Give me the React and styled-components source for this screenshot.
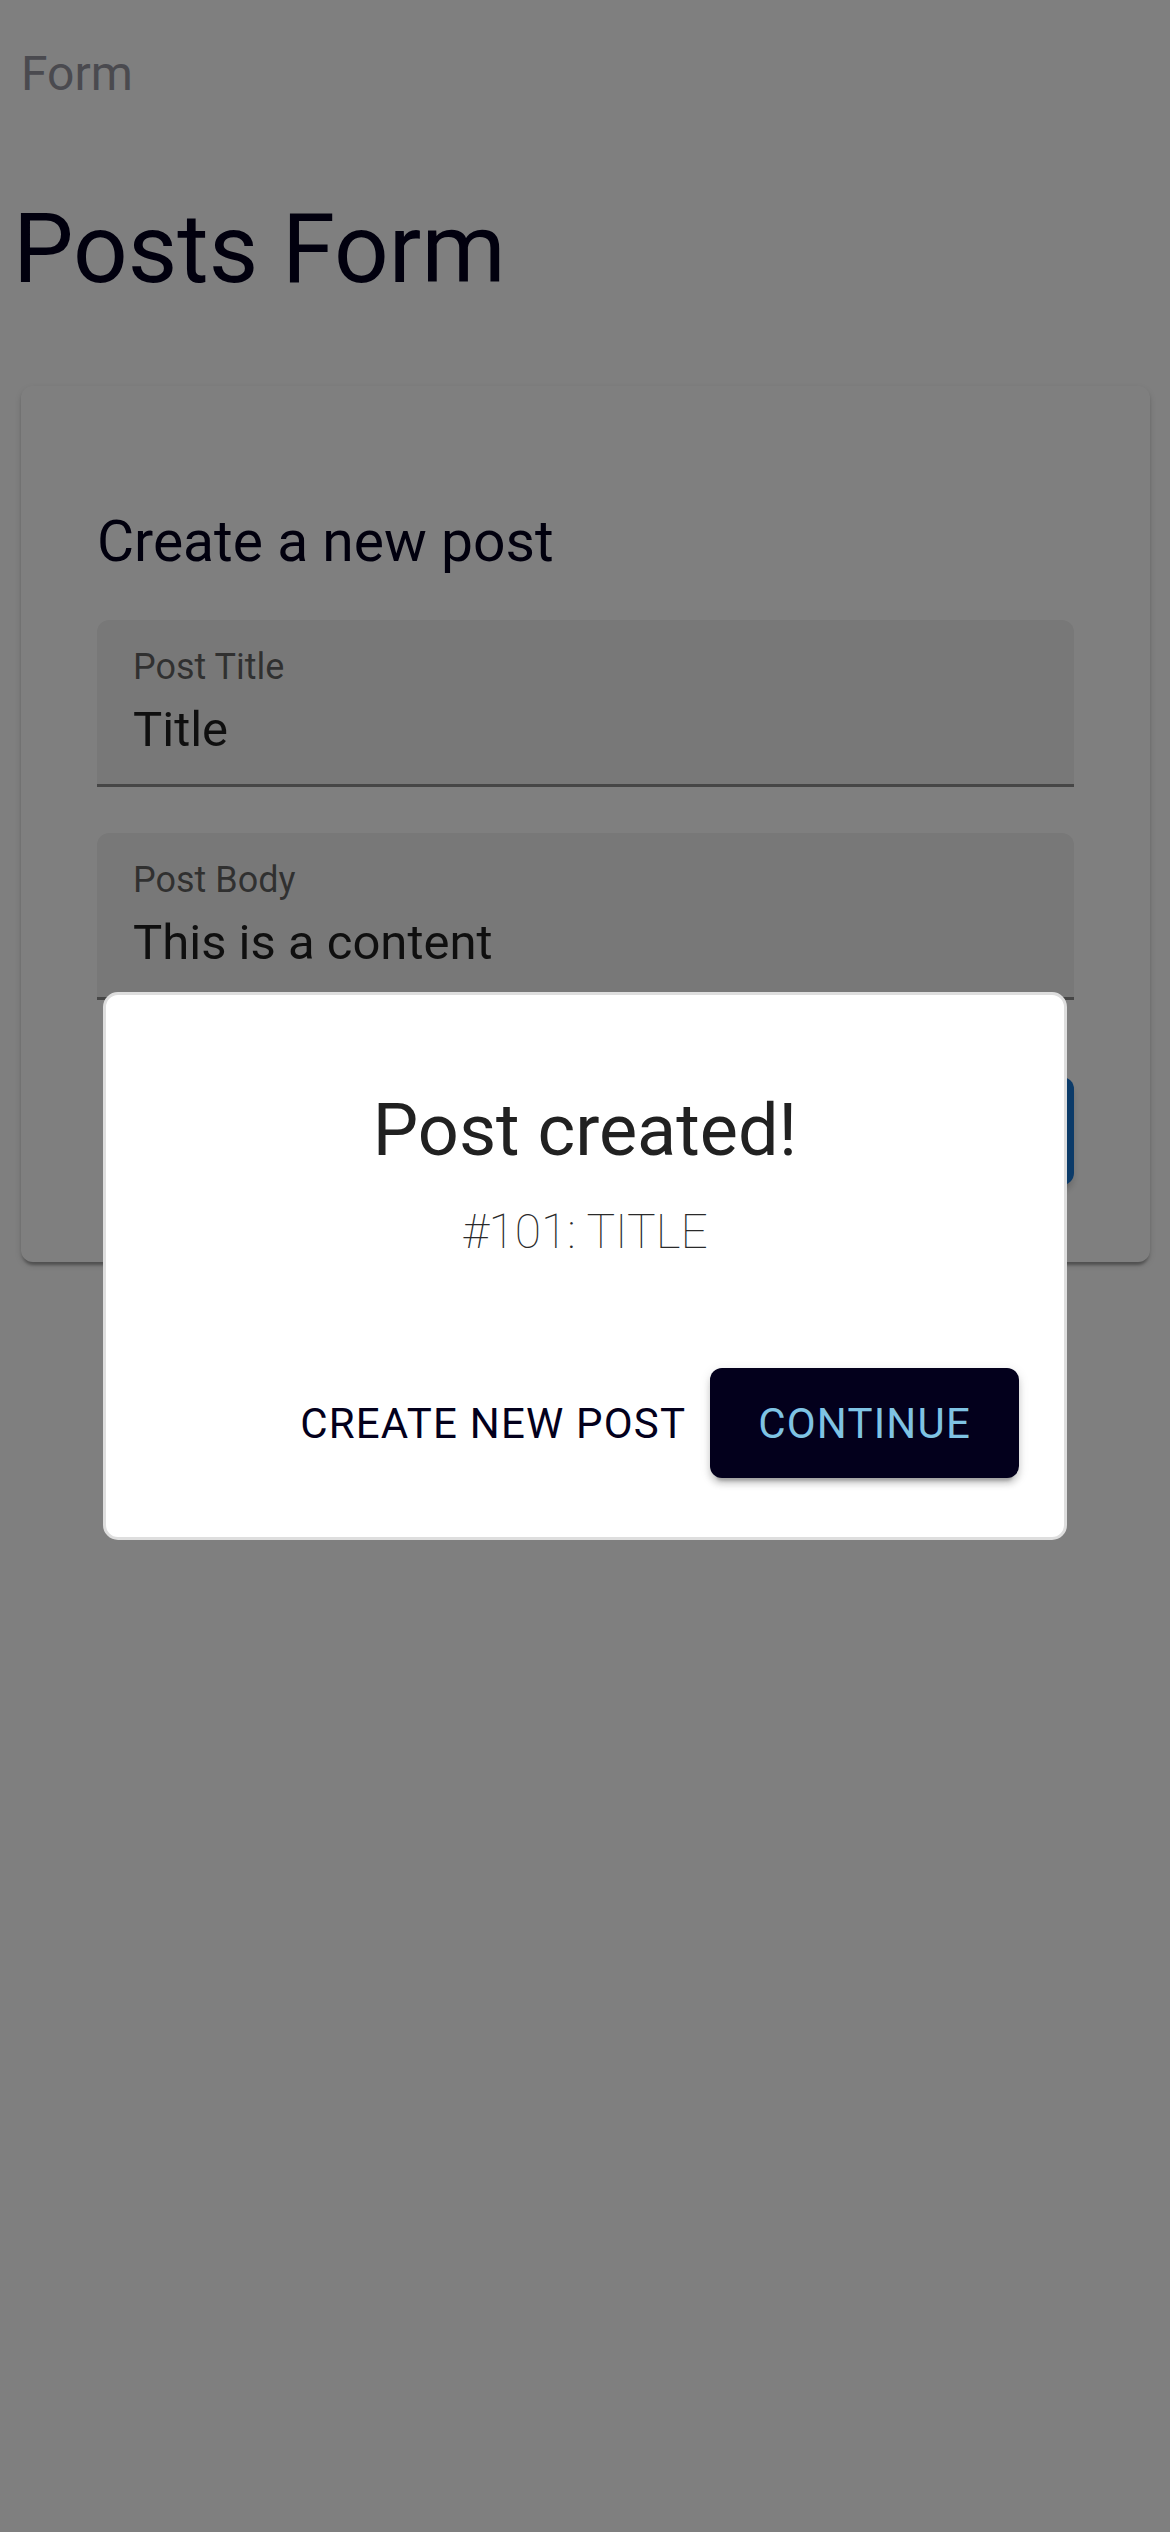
import React, { useState } from 'react';
import styled, { createGlobalStyle } from 'styled-components';

const GlobalStyle = createGlobalStyle`
  html, body {
    margin: 0;
    padding: 0;
    background: #ffffff;
    font-family: Roboto, 'Liberation Sans', sans-serif;
  }
  * {
    box-sizing: border-box;
  }
`;

const Page = styled.div`
  min-height: 2532px;
  padding: 46px 20px 0 21px;
`;

const Crumb = styled.div`
  font-size: 48px;
  line-height: 56px;
  color: #95949f;
`;

const PageTitle = styled.h1`
  margin: 90px 0 0 -8px;
  font-size: 96px;
  line-height: 115px;
  font-weight: 400;
  color: #03001c;
`;

const Card = styled.div`
  margin-top: 79px;
  background: #ffffff;
  border-radius: 12px;
  padding: 122px 76px 77px;
  box-shadow: 0 6px 3px -3px rgba(0, 0, 0, 0.2), 0 3px 3px 0 rgba(0, 0, 0, 0.14),
    0 3px 9px 0 rgba(0, 0, 0, 0.12);
  display: flex;
  flex-direction: column;
`;

const CardTitle = styled.h2`
  margin: 0 0 45px;
  font-size: 57px;
  line-height: 67px;
  font-weight: 400;
  color: #03001c;
`;

const Field = styled.div`
  background: rgba(0, 0, 0, 0.06);
  border-radius: 12px 12px 0 0;
  border-bottom: 3px solid rgba(0, 0, 0, 0.42);
  padding: 29px 36px 30px;
  margin-bottom: ${(p) => p.$gap || 0}px;
`;

const FieldLabel = styled.div`
  font-size: 36px;
  line-height: 36px;
  color: rgba(0, 0, 0, 0.6);
`;

const FieldValue = styled.div`
  margin-top: 21px;
  font-size: 49px;
  line-height: 48px;
  color: rgba(0, 0, 0, 0.87);
`;

const SubmitRow = styled.div`
  display: flex;
  justify-content: flex-end;
  margin-top: 77px;
`;

const SubmitButton = styled.button`
  height: 108px;
  padding: 0 48px;
  border: 0;
  border-radius: 12px;
  background: #1976d2;
  color: #ffffff;
  font-family: Roboto, 'Liberation Sans', sans-serif;
  font-size: 42px;
  font-weight: 500;
  letter-spacing: 1.2px;
  box-shadow: 0 9px 3px -6px rgba(0, 0, 0, 0.2), 0 6px 6px 0 rgba(0, 0, 0, 0.14);
`;

const Backdrop = styled.div`
  position: fixed;
  inset: 0;
  background: rgba(0, 0, 0, 0.5);
  display: flex;
  align-items: center;
  justify-content: center;
`;

const Dialog = styled.div`
  width: 964px;
  background: #ffffff;
  border: 3px solid #dedede;
  border-radius: 15px;
  padding: 93px 45px 59px;
  display: flex;
  flex-direction: column;
`;

const DialogTitle = styled.div`
  text-align: center;
  font-size: 72px;
  line-height: 86px;
  color: #212121;
`;

const DialogSub = styled.div`
  margin-top: 30px;
  text-align: center;
  font-size: 48px;
  line-height: 56px;
  font-weight: 100;
  color: #2a2a2a;
`;

const Actions = styled.div`
  display: flex;
  justify-content: flex-end;
  align-items: center;
  margin-top: 108px;
`;

const ActionButton = styled.button`
  height: 110px;
  padding: 0 ${(p) => (p.$solid ? 48 : 24)}px;
  border: 0;
  border-radius: 12px;
  font-family: Roboto, 'Liberation Sans', sans-serif;
  font-size: 42px;
  font-weight: 400;
  letter-spacing: 1.2px;
  background: ${(p) => (p.$solid ? '#03001c' : 'transparent')};
  color: ${(p) => (p.$solid ? '#7fc3e3' : '#03001c')};
  box-shadow: ${(p) =>
    p.$solid ? '0 9px 3px -6px rgba(0,0,0,0.2), 0 6px 6px 0 rgba(0,0,0,0.14), 0 3px 12px 0 rgba(0,0,0,0.12)' : 'none'};
  cursor: pointer;
`;

const App = () => {
  const [open, setOpen] = useState(true);

  return (
    <>
      <GlobalStyle />
      <Page>
        <Crumb>Form</Crumb>
        <PageTitle>Posts Form</PageTitle>
        <Card>
          <CardTitle>Create a new post</CardTitle>
          <Field $gap={46}>
            <FieldLabel>Post Title</FieldLabel>
            <FieldValue>Title</FieldValue>
          </Field>
          <Field>
            <FieldLabel>Post Body</FieldLabel>
            <FieldValue>This is a content</FieldValue>
          </Field>
          <SubmitRow>
            <SubmitButton>CREATE POST</SubmitButton>
          </SubmitRow>
        </Card>
      </Page>
      {open && (
        <Backdrop>
          <Dialog>
            <DialogTitle>Post created!</DialogTitle>
            <DialogSub>#101: TITLE</DialogSub>
            <Actions>
              <ActionButton onClick={() => setOpen(false)}>CREATE NEW POST</ActionButton>
              <ActionButton $solid onClick={() => setOpen(false)}>
                CONTINUE
              </ActionButton>
            </Actions>
          </Dialog>
        </Backdrop>
      )}
    </>
  );
};

export default App;
